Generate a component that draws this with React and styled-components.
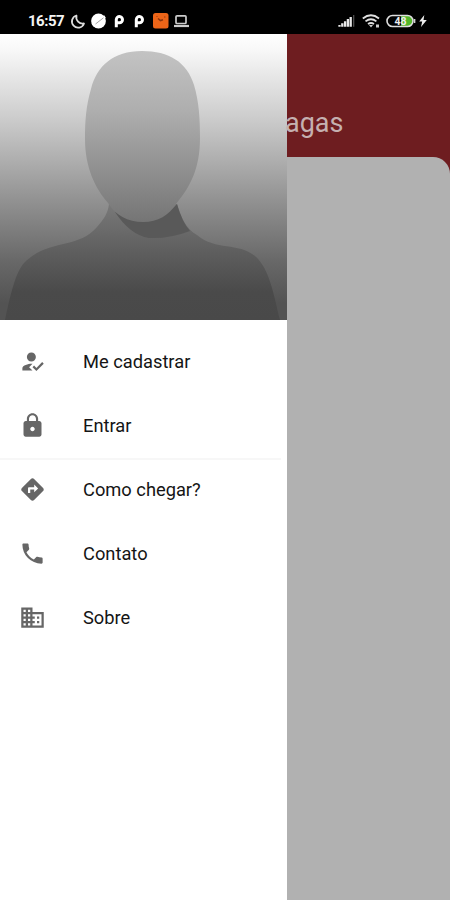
import React from "react";
import styled, { createGlobalStyle } from "styled-components";
import { MdHowToReg, MdLock, MdDirections, MdPhone, MdBusiness } from "react-icons/md";

const GlobalStyle = createGlobalStyle`
  * { box-sizing: border-box; }
  body { margin: 0; background: #b1b1b1; font-family: Roboto, "Noto Sans", sans-serif; }
`;

const Screen = styled.div`
  width: 450px;
  height: 900px;
  display: flex;
  flex-direction: column;
  overflow: hidden;
  background: #b1b1b1;
`;

const StatusBar = styled.header`
  height: 34px;
  flex: none;
  background: #000;
  color: #f4f4f4;
  display: flex;
  justify-content: space-between;
  padding: 9px 23px 0 28px;
`;

const StatusGroup = styled.div`
  display: flex;
  align-items: center;
  height: 24px;
`;

const Clock = styled.span`
  width: 42px;
  font-size: 15px;
  line-height: 24px;
  font-weight: 700;
  letter-spacing: -0.5px;
`;

const StatusIcon = styled.svg`
  display: block;
  flex: none;
  width: ${(p) => p.$w}px;
  height: 24px;
`;

const Body = styled.div`
  display: flex;
  flex: 1;
  min-height: 0;
`;

const Drawer = styled.nav`
  width: 287px;
  flex: none;
  background: #fff;
  display: flex;
  flex-direction: column;
`;

const Avatar = styled.svg`
  display: block;
  width: 287px;
  height: 286px;
  flex: none;
`;

const Menu = styled.div`
  padding-top: 10px;
`;

const MenuItem = styled.a`
  display: flex;
  align-items: center;
  height: 64px;
  padding-left: 19px;
  font-size: 18.3px;
  line-height: 22px;
  color: #151515;

  svg {
    width: 27px;
    height: 27px;
    margin: -1px 37px 0 0;
    color: #666;
    flex: none;
  }
`;

const Label = styled.span`
  display: block;
`;

const Divider = styled.hr`
  height: 2px;
  margin: 0 6px -2px 0;
  border: 0;
  background: #f7f7f7;
`;

const Page = styled.main`
  flex: 1;
  display: flex;
  flex-direction: column;
  background: #6e1d20;
`;

const PageHeader = styled.div`
  height: 123px;
  flex: none;
  padding: 70px 0 0;
`;

const Title = styled.h1`
  margin: 0 0 0 -2px;
  font-size: 27px;
  line-height: 38px;
  font-weight: 400;
  color: #c5b0b0;
`;

const Sheet = styled.section`
  flex: 1;
  background: #b1b1b1;
  border-top-right-radius: 17px;
`;

function Moon() {
  return (
    <StatusIcon $w={20} viewBox="0 0 20 24">
      <path d="M6.5 6.5 A6.2 6.2 0 1 0 14 14.5 A6.5 6.5 0 0 1 6.5 6.5Z" fill="none" stroke="#ddd" strokeWidth="1.8" strokeLinejoin="round" />
    </StatusIcon>
  );
}

function Ball() {
  return (
    <StatusIcon $w={20} viewBox="0 0 20 24">
      <circle cx="8.5" cy="12" r="7.4" fill="#fff" />
      <path d="M2.5 16 L15 7.5" stroke="#fff" strokeWidth="3" />
      <path d="M5.5 15 L13.5 8.8" stroke="#999" strokeWidth="0.9" />
    </StatusIcon>
  );
}

function PMark() {
  return (
    <StatusIcon $w={20} viewBox="0 0 20 24">
      <path d="M6.3 18.3 V10.5 A3.1 3.1 0 1 1 9.4 13.8 H7" fill="none" stroke="#fff" strokeWidth="3" />
    </StatusIcon>
  );
}

function OrangeApp() {
  return (
    <StatusIcon $w={21} viewBox="0 0 21 24">
      <rect x="3" y="4" width="15.5" height="15.5" rx="2.5" fill="#ed6518" />
      <path d="M8 9.5 L10.5 11.5 L13 10.8" fill="none" stroke="#8c350c" strokeWidth="1.6" />
      <path d="M14 8h1.5M6.5 7.5h1" stroke="#9c3d10" />
    </StatusIcon>
  );
}

function Laptop() {
  return (
    <StatusIcon $w={18} viewBox="0 0 18 24">
      <rect x="5" y="6.8" width="10" height="7.7" rx="1" fill="none" stroke="#ccc" strokeWidth="1.7" />
      <path d="M3 17 H18" stroke="#ccc" strokeWidth="2.2" />
    </StatusIcon>
  );
}

function Signal() {
  return (
    <StatusIcon $w={24} viewBox="0 0 24 24">
      <path d="M1.5 17.7V16M4.3 17.7V14.3M7.1 17.7V12.3M9.9 17.7V10M12.7 17.7V8" stroke="#e8e8e8" strokeWidth="2.3" />
      <path d="M15.7 17.7V6" stroke="#555" strokeWidth="1.2" />
    </StatusIcon>
  );
}

function Wifi() {
  return (
    <StatusIcon $w={24} viewBox="0 0 24 24">
      <path d="M.8 9.5Q9 3 17 9.5M3.5 12.4Q9 8 14.4 12.4M6 15Q9 13 12 15" fill="none" stroke="#e1e1e1" strokeWidth="1.8" />
      <path d="M7 16h4l-2 2.5zM14 15.5h3v3h-3z" fill="#ccc" />
    </StatusIcon>
  );
}

function Battery() {
  return (
    <StatusIcon $w={33} viewBox="0 0 33 24">
      <path d="M15 7H22Q26.5 7 26.5 12T22 17H15Z" fill="#53b629" />
      <rect x="1" y="6.5" width="26" height="11" rx="5.5" fill="none" stroke="#ddd" strokeWidth="1.6" />
      <path d="M28.7 10v4" stroke="#ddd" strokeWidth="1.3" />
      <text x="8.5" y="15.7" fill="#eee" fontFamily="Roboto" fontSize="10.5" fontWeight="700">48</text>
    </StatusIcon>
  );
}

function Bolt() {
  return (
    <StatusIcon $w={8} viewBox="0 0 8 24">
      <path d="M5.3 6 .2 12.5H3.2L2 18 7.8 11H4.5Z" fill="#eee" />
    </StatusIcon>
  );
}

function Silhouette() {
  return (
    <Avatar viewBox="0 0 287 286" aria-label="Avatar">
      <defs>
        <linearGradient id="backdrop" gradientUnits="userSpaceOnUse" x1="0" y1="0" x2="0" y2="286">
          <stop offset="0" stopColor="#fff" />
          <stop offset=".06" stopColor="#f7f7f7" />
          <stop offset=".3" stopColor="#cbcbcb" />
          <stop offset=".58" stopColor="#929292" />
          <stop offset=".8" stopColor="#676767" />
          <stop offset=".94" stopColor="#535353" />
          <stop offset="1" stopColor="#535353" />
        </linearGradient>
        <linearGradient id="face" gradientUnits="userSpaceOnUse" x1="0" y1="17" x2="0" y2="188">
          <stop offset="0" stopColor="#c3c3c3" />
          <stop offset=".35" stopColor="#aeaeae" />
          <stop offset="1" stopColor="#757575" />
        </linearGradient>
        <linearGradient id="torso" gradientUnits="userSpaceOnUse" x1="0" y1="170" x2="0" y2="286">
          <stop offset="0" stopColor="#797979" />
          <stop offset=".4" stopColor="#5f5f5f" />
          <stop offset=".76" stopColor="#4a4a4a" />
          <stop offset="1" stopColor="#494949" />
        </linearGradient>
      </defs>
      <path d="M0 0H287V286H0Z" fill="url(#backdrop)" />
      <path d="M5 286C10 263 15 239 24 229C49 204 77 216 97 193C104 185 108 179 109 170H177C181 183 186 195 197 201C216 217 238 208 255 222C270 235 274 262 280 286Z" fill="url(#torso)" />
      <path d="M115 178Q130 201 149 204Q169 205 190 197Q182 188 177 170Q159 191 115 178Z" fill="#595959" />
      <path d="M142 17C113 17 97 32 91 55C86 72 85 87 85 105C85 133 95 154 108 169C115 181 128 188 143 188C158 188 169 181 176 170C190 153 200 135 200 104C200 84 199 68 194 51C187 28 169 17 142 17Z" fill="url(#face)" />
    </Avatar>
  );
}

const accountItems = [
  { icon: MdHowToReg, label: "Me cadastrar" },
  { icon: MdLock, label: "Entrar" },
];

const infoItems = [
  { icon: MdDirections, label: "Como chegar?" },
  { icon: MdPhone, label: "Contato" },
  { icon: MdBusiness, label: "Sobre" },
];

function MenuGroup({ items }) {
  return items.map(({ icon: Icon, label }) => (
    <MenuItem key={label}>
      <Icon />
      <Label>{label}</Label>
    </MenuItem>
  ));
}

export default function App() {
  return (
    <>
      <GlobalStyle />
      <Screen>
        <StatusBar>
          <StatusGroup>
            <Clock>16:57</Clock>
            <Moon />
            <Ball />
            <PMark />
            <PMark />
            <OrangeApp />
            <Laptop />
          </StatusGroup>
          <StatusGroup>
            <Signal />
            <Wifi />
            <Battery />
            <Bolt />
          </StatusGroup>
        </StatusBar>
        <Body>
          <Drawer>
            <Silhouette />
            <Menu>
              <MenuGroup items={accountItems} />
              <Divider />
              <MenuGroup items={infoItems} />
            </Menu>
          </Drawer>
          <Page>
            <PageHeader>
              <Title>agas</Title>
            </PageHeader>
            <Sheet />
          </Page>
        </Body>
      </Screen>
    </>
  );
}
